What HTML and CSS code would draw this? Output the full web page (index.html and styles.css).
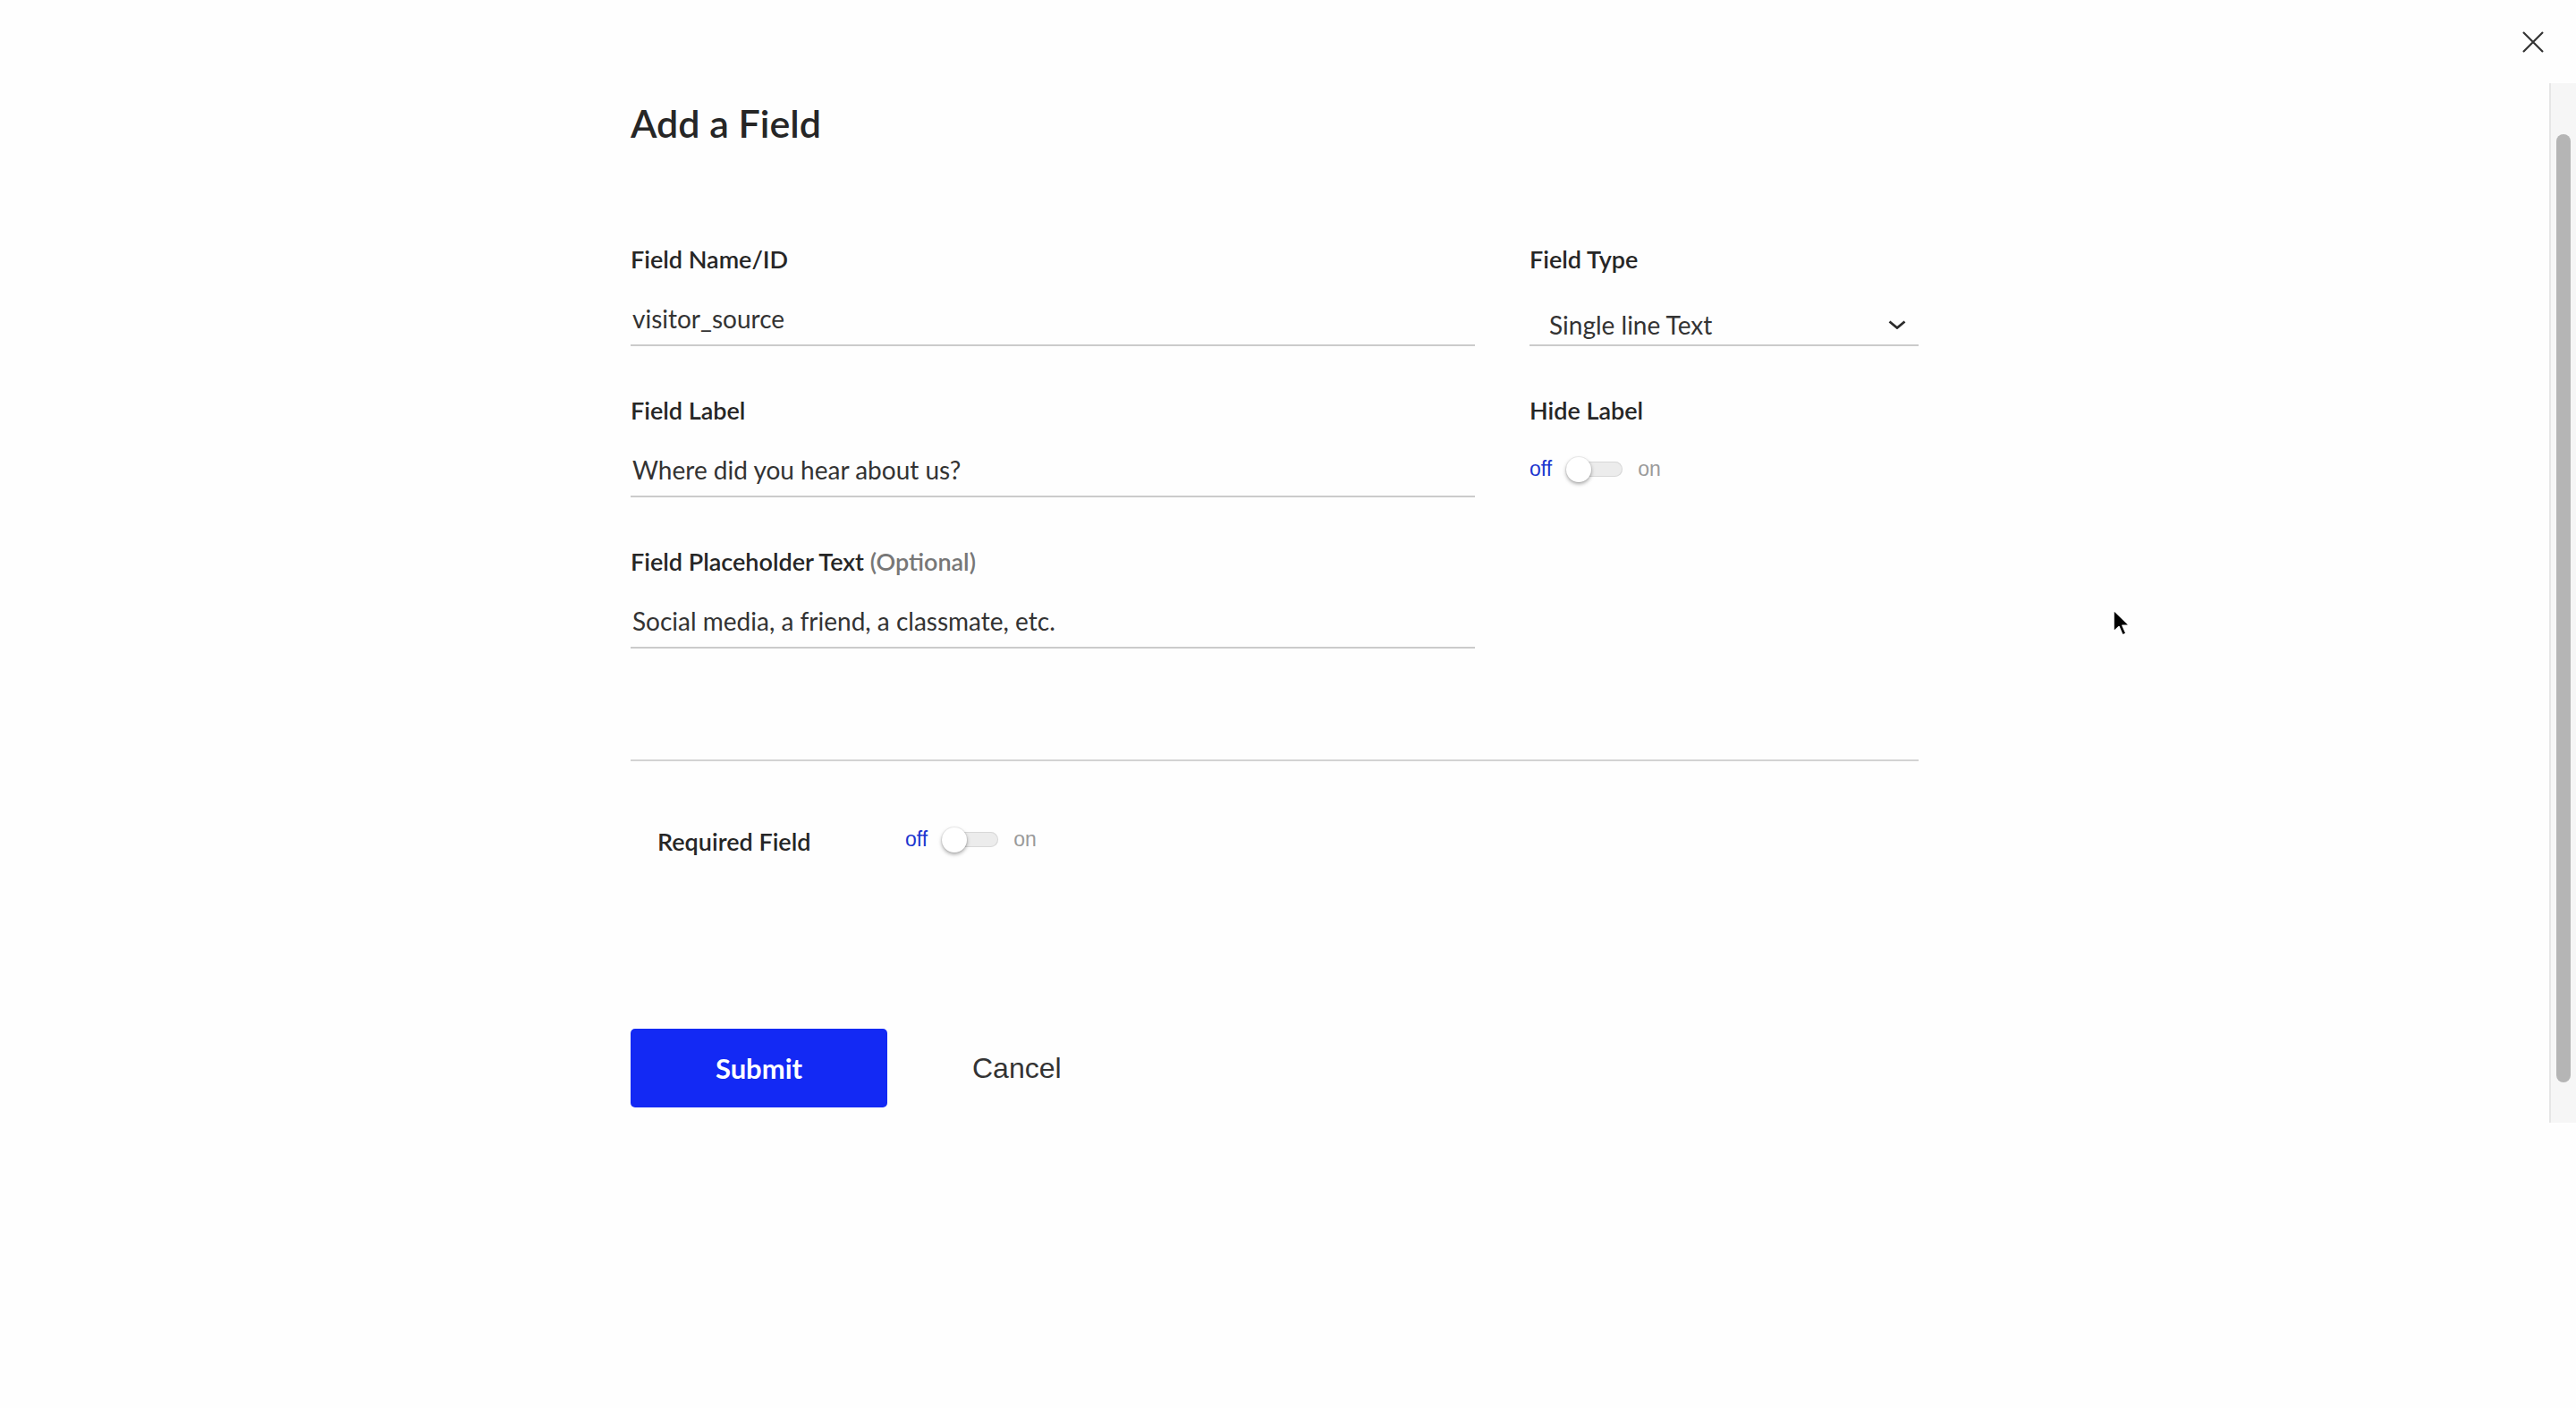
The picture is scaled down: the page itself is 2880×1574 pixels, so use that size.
FILE: index.html
```html
<!DOCTYPE html>
<html lang="en">
<head>
<meta charset="utf-8">
<title>Add a Field</title>
<link rel="stylesheet" href="styles.css">
</head>
<body>
<div class="page">
  <header class="topbar">
    <button class="close" aria-label="Close">
      <svg width="24" height="24" viewBox="0 0 24 24"><path d="M1 1 L23 23 M23 1 L1 23" stroke="#333" stroke-width="2.2" fill="none"/></svg>
    </button>
  </header>
  <div class="main">
    <div class="content">
      <h1 class="title">Add a Field</h1>
      <div class="grid">
        <div class="group">
          <div class="label">Field Name/ID</div>
          <div class="input">visitor_source</div>
        </div>
        <div class="group">
          <div class="label">Field Type</div>
          <div class="select">
            <span>Single line Text</span>
            <svg width="20" height="10" viewBox="0 0 20 10"><path d="M1.5 1.5 L10 8.5 L18.5 1.5" stroke="#2b2b2b" stroke-width="2.8" fill="none"/></svg>
          </div>
        </div>
        <div class="group">
          <div class="label">Field Label</div>
          <div class="input">Where did you hear about us?</div>
        </div>
        <div class="group">
          <div class="label">Hide Label</div>
          <div class="toggle-row">
            <span class="off">off</span>
            <span class="track"><span class="knob"></span></span>
            <span class="on">on</span>
          </div>
        </div>
        <div class="group">
          <div class="label">Field Placeholder Text <span class="optional">(Optional)</span></div>
          <div class="input">Social media, a friend, a classmate, etc.</div>
        </div>
        <div class="group"></div>
      </div>
      <div class="divider"></div>
      <div class="required">
        <div class="label req-label">Required Field</div>
        <div class="toggle-row inline">
          <span class="off">off</span>
          <span class="track"><span class="knob"></span></span>
          <span class="on">on</span>
        </div>
      </div>
      <div class="actions">
        <button class="submit">Submit</button>
        <button class="cancel">Cancel</button>
      </div>
    </div>
    <div class="scrollbar"><div class="thumb"></div></div>
  </div>
  <svg class="cursor" width="22" height="34" viewBox="0 0 22 34"><path d="M1 1 L1 25 L7 19.5 L11 29 L15 27.3 L11 18.3 L19 18.3 Z" fill="#000" stroke="#fff" stroke-width="1.6" stroke-linejoin="round"/></svg>
</div>
</body>
</html>
```
FILE: styles.css
```css
html, body {
  margin: 0;
  padding: 0;
  background: #fefefe;
}
body {
  font-family: Lato, "Noto Sans", sans-serif;
  color: #2b2b2b;
}
.page {
  position: relative;
  width: 2880px;
  height: 1574px;
  display: flex;
  flex-direction: column;
  overflow: hidden;
}
.topbar {
  height: 93px;
  flex: none;
  display: flex;
  justify-content: flex-end;
  align-items: center;
  padding-right: 36px;
}
.close {
  border: 0;
  background: none;
  padding: 0;
  width: 24px;
  height: 24px;
  display: flex;
}
.main {
  display: flex;
  align-items: flex-start;
}
.content {
  flex: 1;
  padding-left: 705px;
}
.title {
  margin: 19px 0 0;
  font-weight: 600;
  font-size: 43px;
  line-height: 52px;
  color: #262626;
}
.grid {
  margin-top: 108px;
  width: 1440px;
  display: grid;
  grid-template-columns: 944px 435px;
  column-gap: 61px;
  row-gap: 54px;
}
.group {
  min-height: 115px;
}
.label {
  font-weight: 600;
  font-size: 27px;
  line-height: 36px;
  color: #262626;
}
.optional {
  color: #777;
}
.input {
  margin-top: 22px;
  padding: 6px 0 9px 2px;
  font-size: 28px;
  line-height: 40px;
  color: #333;
  border-bottom: 2px solid #cbcbcb;
}
.select {
  margin-top: 22px;
  padding: 13px 14px 2px 22px;
  font-size: 28px;
  line-height: 40px;
  color: #333;
  border-bottom: 2px solid #cbcbcb;
  display: flex;
  justify-content: space-between;
  align-items: center;
}
.toggle-row {
  margin-top: 22px;
  height: 50px;
  display: flex;
  align-items: center;
  font-family: "Liberation Sans", Arial, sans-serif;
  font-size: 23px;
}
.toggle-row.inline {
  height: 60px;
  margin-top: -6px;
}
.off {
  color: #1d36cf;
  margin-right: 16px;
}
.on {
  color: #9a9a9a;
  margin-left: 17px;
}
.track {
  position: relative;
  width: 63px;
  height: 17px;
  border-radius: 9px;
  background: #ececec;
  box-shadow: inset 0 0 0 1px #d8d8d8;
}
.knob {
  position: absolute;
  left: 0;
  top: 50%;
  margin-top: -13px;
  width: 28px;
  height: 28px;
  border-radius: 50%;
  background: #fff;
  box-shadow: 0 2px 4px rgba(0, 0, 0, 0.35), 0 0 0 1px rgba(0, 0, 0, 0.05);
}
.divider {
  margin-top: 124px;
  width: 1440px;
  height: 2px;
  background: #d3d3d3;
}
.required {
  margin-top: 60px;
  padding-left: 30px;
  height: 60px;
  display: flex;
  align-items: center;
}
.req-label {
  width: 277px;
  flex: none;
}
.actions {
  margin-top: 179px;
  display: flex;
  align-items: center;
}
.submit {
  width: 287px;
  height: 88px;
  border: 0;
  border-radius: 5px;
  background: #1329f4;
  color: #fff;
  font-family: Lato, "Noto Sans", sans-serif;
  font-weight: 700;
  font-size: 31px;
}
.cancel {
  margin-left: 95px;
  border: 0;
  background: none;
  padding: 0;
  font-family: "Liberation Sans", Arial, sans-serif;
  font-size: 32px;
  color: #333;
}
.scrollbar {
  flex: none;
  box-sizing: border-box;
  width: 30px;
  height: 1162px;
  padding-top: 57px;
  background: #f6f6f6;
  border-left: 2px solid #e6e6e6;
}
.thumb {
  margin-left: 6px;
  width: 16px;
  height: 1060px;
  border-radius: 8px;
  background: #b5b5b5;
}
.cursor {
  position: absolute;
  left: 2362px;
  top: 681px;
}
```
